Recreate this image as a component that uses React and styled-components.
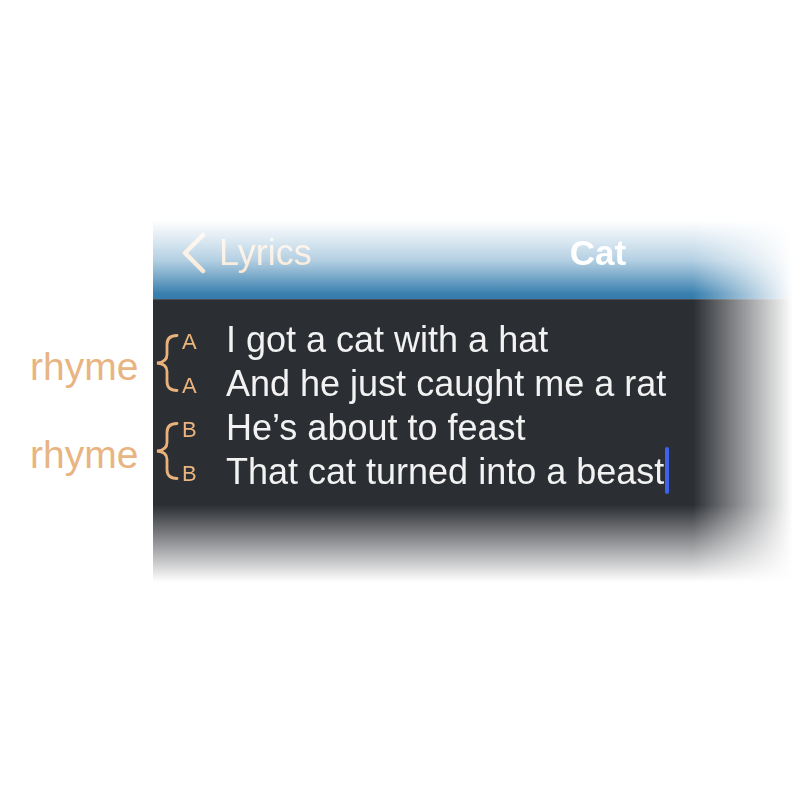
import styled, { createGlobalStyle } from "styled-components";

const GlobalStyle = createGlobalStyle`
  html, body {
    margin: 0;
    background: #ffffff;
    overflow: hidden;
  }
  body {
    font-family: "Liberation Sans", Arial, sans-serif;
  }
`;

const Page = styled.div`
  display: flex;
  width: 800px;
  height: 800px;
  padding-top: 220px;
  box-sizing: border-box;
  overflow: hidden;
`;

const LabelColumn = styled.div`
  flex: none;
  width: 153px;
  padding: 101px 0 0 30px;
  box-sizing: border-box;
  display: flex;
  flex-direction: column;
`;

const RhymeLabel = styled.div`
  height: 88px;
  line-height: 92px;
  font-size: 39px;
  color: #e8b582;
  white-space: nowrap;
`;

const Screen = styled.div`
  flex: none;
  width: 890px;
  height: 370px;
  display: flex;
  flex-direction: column;
  background: #2b2e33;
  -webkit-mask-image: linear-gradient(
      to bottom,
      transparent 0px,
      rgba(0, 0, 0, 0.4) 40px,
      #000 74px,
      #000 285px,
      transparent 362px
    ),
    linear-gradient(to right, #000 540px, transparent 640px);
  -webkit-mask-composite: source-in;
  mask-image: linear-gradient(
      to bottom,
      transparent 0px,
      rgba(0, 0, 0, 0.4) 40px,
      #000 74px,
      #000 285px,
      transparent 362px
    ),
    linear-gradient(to right, #000 540px, transparent 640px);
  mask-composite: intersect;
`;

const NavBar = styled.div`
  position: relative;
  flex: none;
  height: 79px;
  display: flex;
  align-items: flex-start;
  padding-left: 28px;
  background: linear-gradient(to bottom, #5596c2, #367dad);
  border-bottom: 1px solid #4b4e53;
`;

const BackButton = styled.div`
  display: flex;
  align-items: flex-start;
  gap: 12px;
  color: #f7d9b8;
  font-size: 36px;
  line-height: 36px;
  padding-top: 12px;

  span {
    padding-top: 3px;
  }
`;

const Title = styled.div`
  position: absolute;
  left: 0;
  right: 0;
  top: 15px;
  text-align: center;
  font-size: 35px;
  line-height: 36px;
  font-weight: 700;
  color: #ffffff;
`;

const Lyrics = styled.div`
  padding: 18px 0 0 2px;
  display: flex;
  flex-direction: column;
`;

const Stanza = styled.div`
  display: grid;
  grid-template-columns: 24px 47px 1fr;
  grid-auto-rows: 44px;
`;

const Brace = styled.svg`
  grid-column: 1;
  grid-row: 1 / span 2;
  margin-top: 16px;
`;

const RhymeLetter = styled.div`
  grid-column: 2;
  padding: 2px 0 0 3px;
  font-size: 22px;
  line-height: 44px;
  color: #ebb47c;
`;

const LyricLine = styled.div`
  grid-column: 3;
  font-size: 36px;
  line-height: 44px;
  color: #f2f2f2;
  white-space: nowrap;
`;

const Cursor = styled.span`
  display: inline-block;
  width: 4px;
  height: 47px;
  margin: -3px 0 0 1px;
  border-radius: 2px;
  background: #3d62ee;
  vertical-align: top;
`;

const stanzas = [
  {
    letter: "A",
    lines: ["I got a cat with a hat", "And he just caught me a rat"],
  },
  {
    letter: "B",
    lines: ["He\u2019s about to feast", "That cat turned into a beast"],
  },
];

function CurlyBrace() {
  return (
    <Brace width="24" height="58" viewBox="0 0 24 58" fill="none">
      <path
        d="M22 1.5 C15.5 1.5 12 4.5 12 10.5 L12 20.5 C12 26 8.5 28.5 2 29 C8.5 29.5 12 32 12 37.5 L12 47.5 C12 53.5 15.5 56.5 22 56.5"
        stroke="#e8b27c"
        strokeWidth="2.8"
        strokeLinecap="round"
      />
    </Brace>
  );
}

export default function App() {
  return (
    <>
      <GlobalStyle />
      <Page>
        <LabelColumn>
          {stanzas.map((s) => (
            <RhymeLabel key={s.letter}>rhyme</RhymeLabel>
          ))}
        </LabelColumn>
        <Screen>
          <NavBar>
            <BackButton>
              <svg width="26" height="42" viewBox="0 0 26 42" fill="none">
                <path
                  d="M22 3 L4 21 L22 39"
                  stroke="#f7d9b8"
                  strokeWidth="4.5"
                  strokeLinecap="round"
                  strokeLinejoin="round"
                />
              </svg>
              <span>Lyrics</span>
            </BackButton>
            <Title>Cat</Title>
          </NavBar>
          <Lyrics>
            {stanzas.map((s, si) => (
              <Stanza key={s.letter}>
                <CurlyBrace />
                {s.lines.map((line, li) => (
                  <>
                    <RhymeLetter key={"l" + li} style={{ gridRow: li + 1 }}>
                      {s.letter}
                    </RhymeLetter>
                    <LyricLine key={"t" + li} style={{ gridRow: li + 1 }}>
                      {line}
                      {si === stanzas.length - 1 && li === s.lines.length - 1 && <Cursor />}
                    </LyricLine>
                  </>
                ))}
              </Stanza>
            ))}
          </Lyrics>
        </Screen>
      </Page>
    </>
  );
}
